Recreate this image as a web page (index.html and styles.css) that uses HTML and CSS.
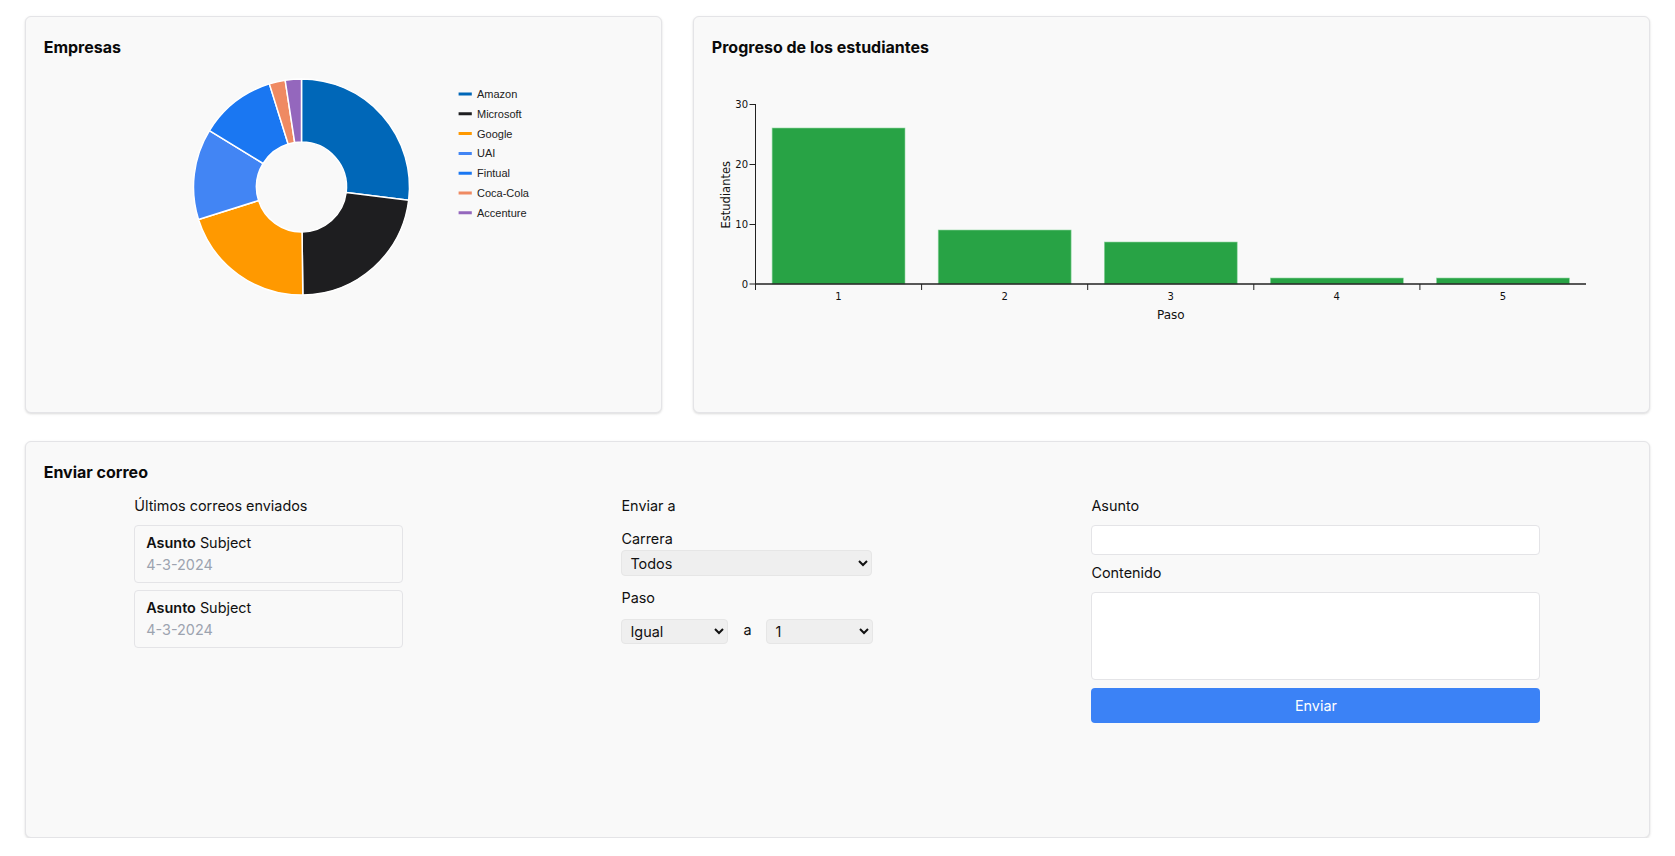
FILE: index.html
```html
<!DOCTYPE html>
<html lang="es">
<head>
<meta charset="utf-8">
<title>Panel</title>
<link rel="stylesheet" href="styles.css">
</head>
<body>
<main class="page">
  <section class="card">
    <h2 class="card-title">Empresas</h2>
    <svg class="chart" width="600" height="300" viewBox="0 0 600 300">
      <g class="slices" stroke="#ffffff" stroke-width="1.5" stroke-linejoin="round">
        <path fill="#0067b8" d="M257.5 20 A108 108 0 0 1 364.695 141.162 L302.165 133.484 A45 45 0 0 0 257.5 83 Z"/>
        <path fill="#1e1e20" d="M364.695 141.162 A108 108 0 0 1 258.819 235.992 L258.05 172.997 A45 45 0 0 0 302.165 133.484 Z"/>
        <path fill="#ff9900" d="M258.819 235.992 A108 108 0 0 1 154.498 160.477 L214.583 141.532 A45 45 0 0 0 258.05 172.997 Z"/>
        <path fill="#4285f4" d="M154.498 160.477 A108 108 0 0 1 165.415 71.57 L219.131 104.487 A45 45 0 0 0 214.583 141.532 Z"/>
        <path fill="#1a77f2" d="M165.415 71.57 A108 108 0 0 1 225.384 24.886 L244.118 85.036 A45 45 0 0 0 219.131 104.487 Z"/>
        <path fill="#ef8a62" d="M225.384 24.886 A108 108 0 0 1 241.164 21.243 L250.693 83.518 A45 45 0 0 0 244.118 85.036 Z"/>
        <path fill="#9467bd" d="M241.164 21.243 A108 108 0 0 1 257.5 20 L257.5 83 A45 45 0 0 0 250.693 83.518 Z"/>
      </g>
      <g class="legend">
        <line x1="414.6" y1="35" x2="427.8" y2="35" stroke="#0067b8"/>
        <text x="433" y="39">Amazon</text>
        <line x1="414.6" y1="54.8" x2="427.8" y2="54.8" stroke="#1e1e20"/>
        <text x="433" y="58.8">Microsoft</text>
        <line x1="414.6" y1="74.6" x2="427.8" y2="74.6" stroke="#ff9900"/>
        <text x="433" y="78.6">Google</text>
        <line x1="414.6" y1="94.4" x2="427.8" y2="94.4" stroke="#4285f4"/>
        <text x="433" y="98.4">UAI</text>
        <line x1="414.6" y1="114.2" x2="427.8" y2="114.2" stroke="#1a77f2"/>
        <text x="433" y="118.2">Fintual</text>
        <line x1="414.6" y1="134" x2="427.8" y2="134" stroke="#ef8a62"/>
        <text x="433" y="138">Coca-Cola</text>
        <line x1="414.6" y1="153.8" x2="427.8" y2="153.8" stroke="#9467bd"/>
        <text x="433" y="157.8">Accenture</text>
      </g>
    </svg>
  </section>

  <section class="card">
    <h2 class="card-title">Progreso de los estudiantes</h2>
    <svg class="chart" width="918" height="300" viewBox="0 0 918 300">
      <g class="bars" fill="#28a345" stroke="#8fd6a0" stroke-width="0.6">
        <rect x="60.1" y="69" width="132.9" height="156"/>
        <rect x="226.2" y="171" width="132.9" height="54"/>
        <rect x="392.3" y="183" width="132.9" height="42"/>
        <rect x="558.4" y="219" width="132.9" height="6"/>
        <rect x="724.5" y="219" width="132.9" height="6"/>
      </g>
      <g class="axis" stroke="#222222" fill="none">
        <line x1="43.5" y1="45" x2="43.5" y2="225" stroke-width="1"/>
        <line x1="37.5" y1="45.5" x2="43.5" y2="45.5"/>
        <line x1="37.5" y1="105.5" x2="43.5" y2="105.5"/>
        <line x1="37.5" y1="165.5" x2="43.5" y2="165.5"/>
        <line x1="37.5" y1="225" x2="43.5" y2="225"/>
        <line x1="43" y1="225" x2="874" y2="225" stroke-width="1.6"/>
        <line x1="43.5" y1="225" x2="43.5" y2="231"/>
        <line x1="209.6" y1="225" x2="209.6" y2="231"/>
        <line x1="375.7" y1="225" x2="375.7" y2="231"/>
        <line x1="541.8" y1="225" x2="541.8" y2="231"/>
        <line x1="707.9" y1="225" x2="707.9" y2="231"/>
      </g>
      <g class="ticks ticks-y">
        <text x="36" y="49">30</text>
        <text x="36" y="109">20</text>
        <text x="36" y="169">10</text>
        <text x="36" y="229">0</text>
      </g>
      <g class="ticks ticks-x">
        <text x="126.5" y="241">1</text>
        <text x="292.6" y="241">2</text>
        <text x="458.7" y="241">3</text>
        <text x="624.8" y="241">4</text>
        <text x="790.9" y="241">5</text>
      </g>
      <text class="axis-label" x="458.8" y="260">Paso</text>
      <text class="axis-label axis-label-y" transform="translate(18 135.7) rotate(-90)">Estudiantes</text>
    </svg>
  </section>

  <section class="card card-wide">
    <h2 class="card-title">Enviar correo</h2>
    <div class="mail-row">
      <div class="col col-sent">
        <p class="label">Últimos correos enviados</p>
        <article class="sent-item">
          <p class="sent-subject"><strong>Asunto</strong> Subject</p>
          <p class="sent-date">4-3-2024</p>
        </article>
        <article class="sent-item">
          <p class="sent-subject"><strong>Asunto</strong> Subject</p>
          <p class="sent-date">4-3-2024</p>
        </article>
      </div>

      <div class="col col-target">
        <p class="label">Enviar a</p>
        <div class="field">
          <label class="label" for="carrera">Carrera</label>
          <select id="carrera" class="select select-full">
            <option>Todos</option>
          </select>
        </div>
        <p class="label">Paso</p>
        <div class="step-row">
          <select class="select select-half">
            <option>Igual</option>
          </select>
          <span class="step-a">a</span>
          <select class="select select-half">
            <option>1</option>
          </select>
        </div>
      </div>

      <div class="col col-form">
        <label class="label" for="asunto">Asunto</label>
        <input id="asunto" class="input" type="text">
        <label class="label" for="contenido">Contenido</label>
        <textarea id="contenido" class="textarea"></textarea>
        <button class="send" type="button">Enviar</button>
      </div>
    </div>
  </section>
</main>
</body>
</html>
```

FILE: styles.css
```css
* {
  box-sizing: border-box;
}

html, body {
  margin: 0;
  padding: 0;
  background: #ffffff;
}

body {
  font-family: Inter, "Noto Sans", sans-serif;
  color: #111111;
  font-size: 14.4px;
}

.page {
  display: grid;
  grid-template-columns: 637.6fr 957fr;
  grid-template-rows: 396.4px 396.4px;
  column-gap: 30.5px;
  row-gap: 28.5px;
  padding: 16.3px 25px 0 24.7px;
}

.card {
  background: #f9f9f9;
  border: 1px solid #e4e4e7;
  border-radius: 6px;
  box-shadow: 0 1px 3px rgba(0, 0, 0, 0.10), 0 1px 2px rgba(0, 0, 0, 0.05);
  padding: 18px;
  overflow: hidden;
}

.card-wide {
  grid-column: 1 / span 2;
}

.card-title {
  margin: 0;
  font-size: 16px;
  line-height: 24px;
  font-weight: 700;
  color: #0a0a0a;
}

.chart {
  display: block;
}

.legend line {
  stroke-width: 3;
}

.legend text {
  font-family: "Liberation Sans", Arial, sans-serif;
  font-size: 11px;
  fill: #222222;
}

.ticks text {
  font-family: "DejaVu Sans", sans-serif;
  font-size: 10px;
  fill: #111111;
}

.ticks-y text {
  text-anchor: end;
}

.ticks-x text {
  text-anchor: middle;
}

.axis-label {
  font-family: "DejaVu Sans", sans-serif;
  font-size: 12px;
  fill: #111111;
  text-anchor: middle;
}

.axis-label-y {
  font-size: 11.5px;
}

.mail-row {
  display: flex;
  justify-content: center;
  align-items: flex-start;
  gap: 218px;
  margin-top: 11.3px;
}

.col {
  display: flex;
  flex-direction: column;
}

.col-sent {
  width: 269.2px;
  gap: 7.5px;
}

.col-target {
  width: 252px;
  gap: 10.5px;
}

.col-form {
  width: 449px;
  gap: 7.5px;
}

.label {
  margin: 0;
  display: block;
  font-size: 14.4px;
  line-height: 22px;
  color: #111111;
}

.sent-item {
  border: 1px solid #e4e4e7;
  border-radius: 4px;
  padding: 6px 11px;
  background: #f9f9f9;
}

.sent-subject,
.sent-date {
  margin: 0;
  font-size: 14.4px;
  line-height: 22px;
}

.sent-subject strong {
  font-weight: 600;
}

.sent-date {
  color: #9ca3af;
}

.field {
  display: flex;
  flex-direction: column;
}

.select {
  font-family: inherit;
  font-size: 14.4px;
  color: #111111;
  height: 26.4px;
  padding: 0 4px;
  background-color: #efefef;
  border: 1px solid #e6e6e6;
  border-radius: 4px;
  margin: 0;
}

.select-full {
  width: 251px;
}

.select-half {
  width: 107.2px;
  height: 25.4px;
}

.step-row {
  display: flex;
  align-items: center;
  gap: 15px;
  margin-top: -0.5px;
}

.step-a {
  font-size: 14.4px;
  line-height: 22px;
  margin-top: -4px;
}

.input,
.textarea {
  display: block;
  width: 100%;
  margin: 0;
  background: #ffffff;
  border: 1px solid #e4e4e7;
  border-radius: 4px;
  font-family: inherit;
  font-size: 14.4px;
  padding: 4px 8px;
  outline: none;
  resize: none;
}

.input {
  height: 29.6px;
}

.textarea {
  height: 88.6px;
}

.send {
  display: block;
  width: 100%;
  height: 35.7px;
  margin: 0;
  border: none;
  border-radius: 4px;
  background: #3b82f6;
  color: #ffffff;
  font-family: inherit;
  font-size: 14.4px;
}
```
